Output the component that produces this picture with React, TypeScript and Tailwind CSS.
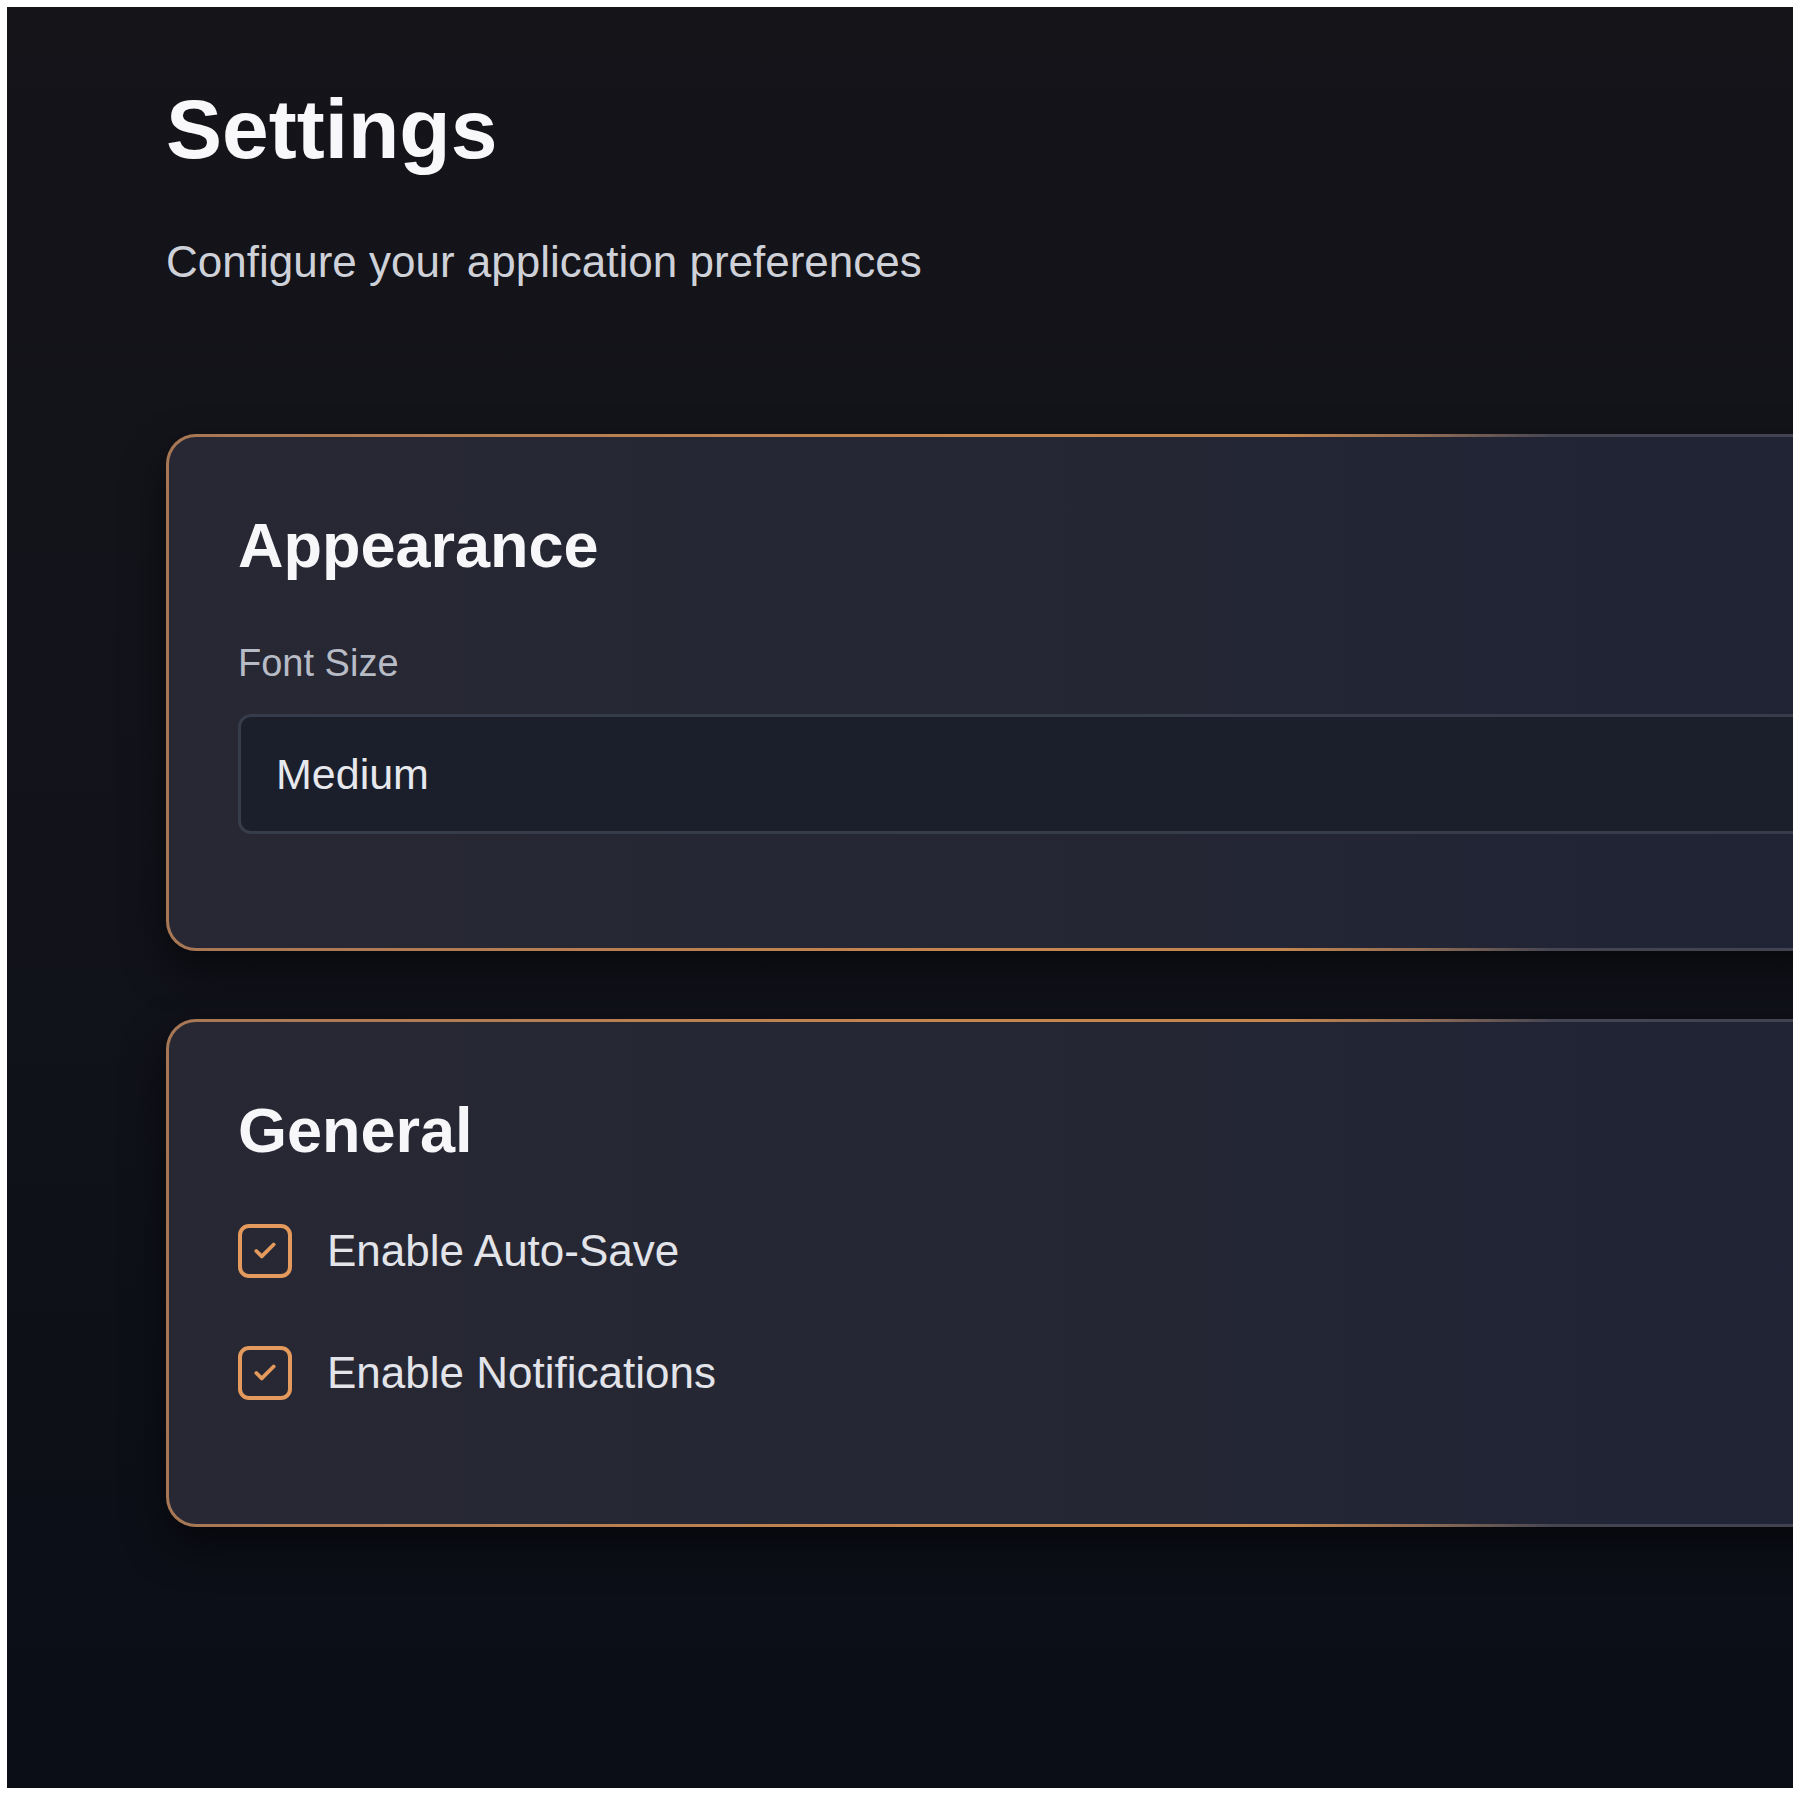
import { useState } from "react";
import { Check } from "lucide-react";

function SettingCheckbox({ label, checked, onChange }: { label: string; checked: boolean; onChange: () => void }) {
  return (
    <label className="flex items-center gap-[35px] cursor-pointer select-none">
      <button
        type="button"
        onClick={onChange}
        className="w-[54px] h-[54px] flex items-center justify-center rounded-[11px] border-[4px] border-[#e39a5c] bg-transparent"
      >
        {checked && <Check size={26} strokeWidth={3.5} className="text-[#e39a5c]" />}
      </button>
      <span className="text-[44px] leading-none text-[#e2e4ea]">{label}</span>
    </label>
  );
}

function Card({ title, children, bottom }: { title: string; children: React.ReactNode; bottom: string }) {
  return (
    <div className="w-[1800px] rounded-[30px] p-[3px] bg-[linear-gradient(90deg,#a77755_0%,#c6864f_45%,#c3864f_62%,#8f6c55_70%,#454552_77%,#3d4150_100%)] shadow-[0_18px_40px_rgba(0,0,0,0.55)]">
      <div className={`rounded-[27px] bg-[linear-gradient(90deg,#272833_0%,#242634_55%,#1f2335_100%)] pl-[69px] pt-[77px] ${bottom}`}>
        <h2 className="text-[63px] leading-none font-bold text-[#f7f7fa]">{title}</h2>
        {children}
      </div>
    </div>
  );
}

export default function App() {
  const [autoSave, setAutoSave] = useState(true);
  const [notifications, setNotifications] = useState(true);

  return (
    <div className="h-[1795px] bg-white p-[7px]" style={{ fontFamily: '"Liberation Sans", Arial, sans-serif' }}>
      <div className="h-full overflow-hidden bg-[linear-gradient(180deg,#141419_0%,#12131a_45%,#0b0e17_100%)] pl-[159px] pt-[80px]">
        <h1 className="text-[84px] leading-none font-bold text-[#f8f8fa]">Settings</h1>
        <p className="mt-[69px] text-[44px] leading-none text-[#cfd1d8]">Configure your application preferences</p>

        <div className="mt-[150px] flex flex-col gap-[68px]">
          {/* Appearance */}
          <Card title="Appearance" bottom="pb-[114px]">
            <div className="mt-[67px] text-[38px] leading-none text-[#b7bbc5]">Font Size</div>
            <div className="mt-[32px] h-[120px] flex items-center rounded-[13px] border-[3px] border-[#373c4b] bg-[#1b1f2b] pl-[35px]">
              <span className="text-[43px] leading-none text-[#e6e8ee]">Medium</span>
            </div>
          </Card>

          {/* General */}
          <Card title="General" bottom="pb-[124px]">
            <div className="mt-[62px] flex flex-col gap-[68px]">
              <SettingCheckbox label="Enable Auto-Save" checked={autoSave} onChange={() => setAutoSave(!autoSave)} />
              <SettingCheckbox label="Enable Notifications" checked={notifications} onChange={() => setNotifications(!notifications)} />
            </div>
          </Card>
        </div>
      </div>
    </div>
  );
}
